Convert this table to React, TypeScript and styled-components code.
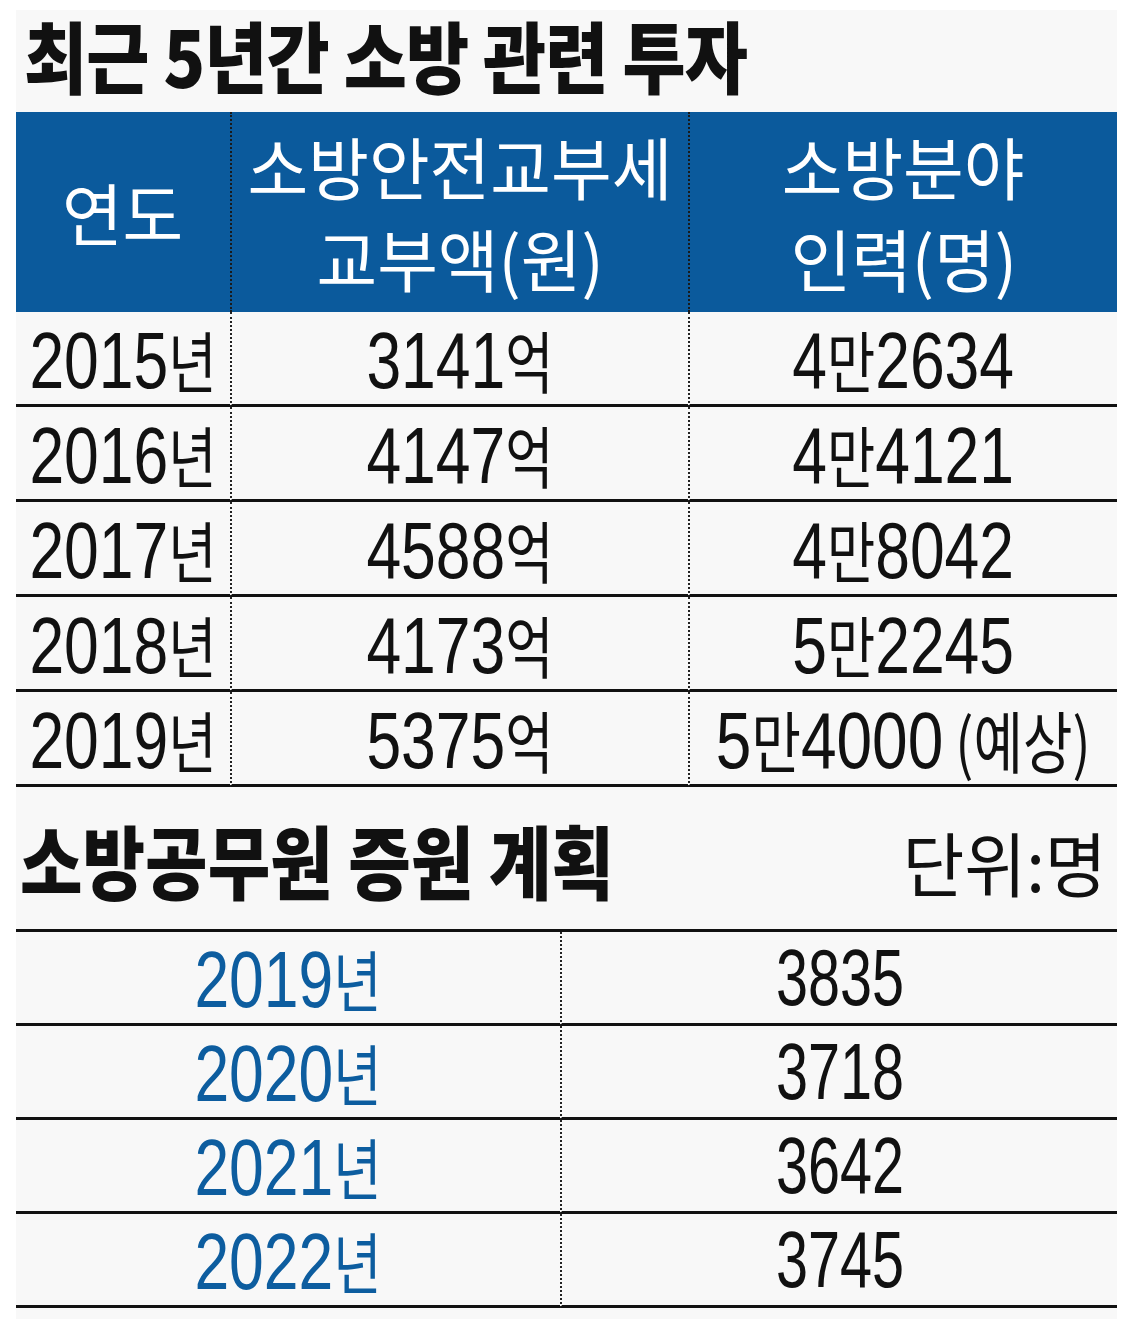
import styled, { createGlobalStyle } from "styled-components";

const GlobalStyle = createGlobalStyle`
    body {
        margin: 0;
        background: #ffffff;
    }
`;

const StyledPanel = styled.div`
    margin: 10px 0 0 16px;
    width: 1101px;
    min-height: 1309px;
    background: #f8f8f8;
    font-family: "Liberation Sans", "Noto Sans CJK KR", sans-serif;
    color: #111;
`;

const StyledSqueeze = styled.span<{ $sx?: number; $origin?: string }>`
    display: inline-block;
    white-space: nowrap;
    transform: scaleX(${(p) => p.$sx ?? 0.78});
    transform-origin: ${(p) => p.$origin ?? "center"};
`;

const StyledHangul = styled.span`
    font-family: "Noto Sans CJK KR", sans-serif;
    font-size: 0.84em;
`;

const StyledTitle = styled.h1`
    margin: 0;
    height: 102px;
    padding-left: 8px;
    font-family: "Noto Sans CJK KR", sans-serif;
    font-weight: 900;
    font-size: 78px;
    line-height: 88px;
    letter-spacing: -1px;
`;

const StyledTable = styled.div<{ $cols: string }>`
    display: grid;
    grid-template-columns: ${(p) => p.$cols};
`;

const StyledHeadCell = styled.div<{ $dotted?: boolean }>`
    min-width: 0;
    height: 200px;
    background: #0b5a9c;
    color: #ffffff;
    display: flex;
    flex-direction: column;
    align-items: center;
    justify-content: center;
    font-family: "Noto Sans CJK KR", sans-serif;
    font-weight: 400;
    font-size: 68px;
    line-height: 92px;
    border-left: ${(p) => (p.$dotted ? "2px dotted #1a1a1a" : "none")};
`;

const StyledCell = styled.div<{ $dotted?: boolean; $blue?: boolean; $h: number }>`
    min-width: 0;
    height: ${(p) => p.$h}px;
    box-sizing: border-box;
    border-bottom: 3px solid #111;
    border-left: ${(p) => (p.$dotted ? "2px dotted #222" : "none")};
    display: flex;
    align-items: center;
    justify-content: center;
    font-size: 80px;
    color: ${(p) => (p.$blue ? "#0d5d9f" : "#111")};
`;

const StyledSubHead = styled.div`
    height: 145px;
    box-sizing: border-box;
    border-bottom: 3px solid #111;
    display: flex;
    align-items: center;
    justify-content: space-between;
    padding: 0 10px 0 4px;
`;

const StyledSubTitle = styled.h2`
    margin: 0;
    font-family: "Noto Sans CJK KR", sans-serif;
    font-weight: 900;
    font-size: 80px;
    line-height: 96px;
`;

const StyledUnit = styled.span`
    font-family: "Noto Sans CJK KR", sans-serif;
    font-weight: 400;
    font-size: 70px;
    line-height: 90px;
    padding-top: 8px;
`;

const investments = [
    { year: "2015", money: "3141", man: "4", rest: "2634" },
    { year: "2016", money: "4147", man: "4", rest: "4121" },
    { year: "2017", money: "4588", man: "4", rest: "8042" },
    { year: "2018", money: "4173", man: "5", rest: "2245" },
    { year: "2019", money: "5375", man: "5", rest: "4000", note: "예상" },
];

const hires = [
    { year: "2019", count: "3835" },
    { year: "2020", count: "3718" },
    { year: "2021", count: "3642" },
    { year: "2022", count: "3745" },
];

const App = () => {
    return (
        <StyledPanel>
            <GlobalStyle />
            <StyledTitle>
                <StyledSqueeze $sx={0.88} $origin="left">최근 5년간 소방 관련 투자</StyledSqueeze>
            </StyledTitle>

            <StyledTable $cols="214px 458px minmax(0, 1fr)">
                <StyledHeadCell>
                    <StyledSqueeze $sx={0.97}>연도</StyledSqueeze>
                </StyledHeadCell>
                <StyledHeadCell $dotted>
                    <StyledSqueeze $sx={0.97}>소방안전교부세</StyledSqueeze>
                    <StyledSqueeze $sx={0.97}>교부액(원)</StyledSqueeze>
                </StyledHeadCell>
                <StyledHeadCell $dotted>
                    <StyledSqueeze $sx={0.97}>소방분야</StyledSqueeze>
                    <StyledSqueeze $sx={0.97}>인력(명)</StyledSqueeze>
                </StyledHeadCell>

                {investments.map((row) => (
                    <>
                        <StyledCell key={row.year + "y"} $h={95}>
                            <StyledSqueeze>
                                {row.year}
                                <StyledHangul>년</StyledHangul>
                            </StyledSqueeze>
                        </StyledCell>
                        <StyledCell key={row.year + "m"} $h={95} $dotted>
                            <StyledSqueeze>
                                {row.money}
                                <StyledHangul>억</StyledHangul>
                            </StyledSqueeze>
                        </StyledCell>
                        <StyledCell key={row.year + "p"} $h={95} $dotted>
                            <StyledSqueeze $sx={row.note ? 0.8 : 0.78}>
                                {row.man}
                                <StyledHangul>만</StyledHangul>
                                {row.rest}
                                {row.note && <StyledHangul> ({row.note})</StyledHangul>}
                            </StyledSqueeze>
                        </StyledCell>
                    </>
                ))}
            </StyledTable>

            <StyledSubHead>
                <StyledSubTitle>
                    <StyledSqueeze $sx={0.85} $origin="left">소방공무원 증원 계획</StyledSqueeze>
                </StyledSubTitle>
                <StyledUnit>
                    <StyledSqueeze $sx={0.96} $origin="right">단위:명</StyledSqueeze>
                </StyledUnit>
            </StyledSubHead>

            <StyledTable $cols="544px minmax(0, 1fr)">
                {hires.map((row) => (
                    <>
                        <StyledCell key={row.year + "y"} $h={94} $blue>
                            <StyledSqueeze>
                                {row.year}
                                <StyledHangul>년</StyledHangul>
                            </StyledSqueeze>
                        </StyledCell>
                        <StyledCell key={row.year + "c"} $h={94} $dotted>
                            <StyledSqueeze $sx={0.72}>{row.count}</StyledSqueeze>
                        </StyledCell>
                    </>
                ))}
            </StyledTable>
        </StyledPanel>
    );
};

export default App;
